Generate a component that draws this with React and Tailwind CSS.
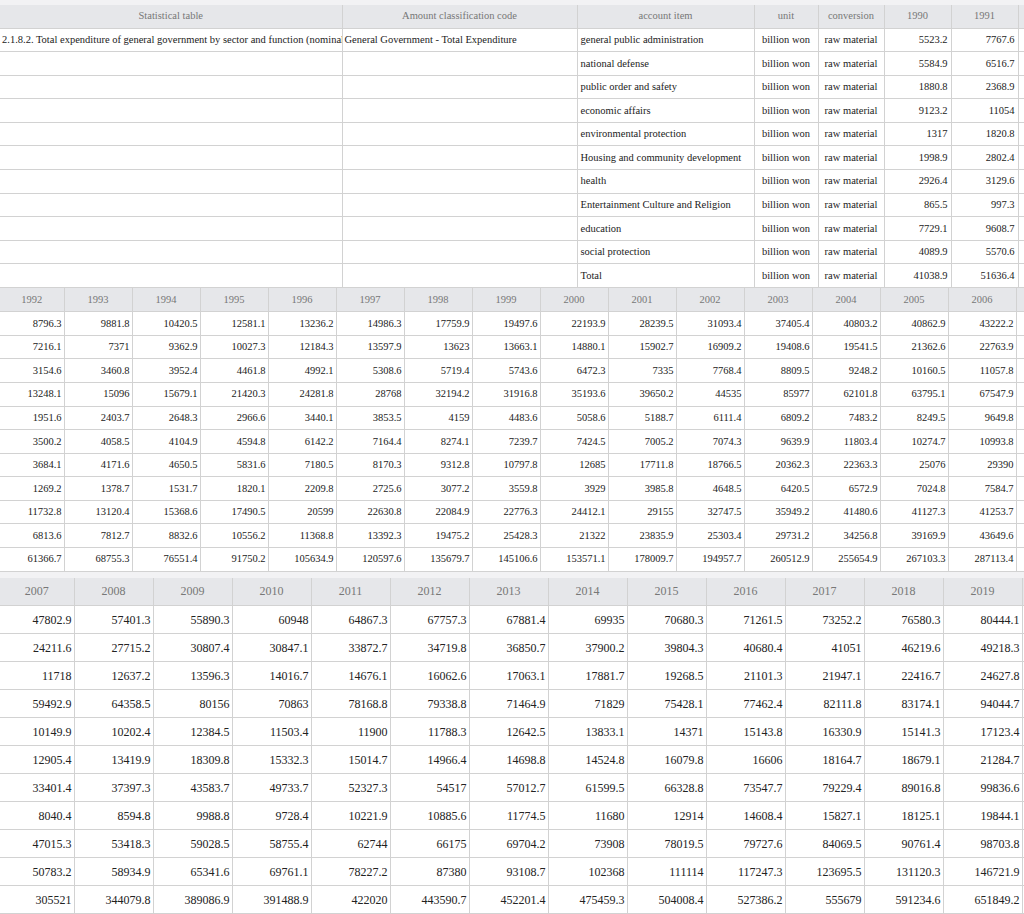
const items = ["general public administration","national defense","public order and safety","economic affairs","environmental protection","Housing and community development","health","Entertainment Culture and Religion","education","social protection","Total"];
const v90 = ["5523.2","5584.9","1880.8","9123.2","1317","1998.9","2926.4","865.5","7729.1","4089.9","41038.9"];
const v91 = ["7767.6","6516.7","2368.9","11054","1820.8","2802.4","3129.6","997.3","9608.7","5570.6","51636.4"];
const y2 = ["1992","1993","1994","1995","1996","1997","1998","1999","2000","2001","2002","2003","2004","2005","2006"];
const d2 = [
["8796.3","9881.8","10420.5","12581.1","13236.2","14986.3","17759.9","19497.6","22193.9","28239.5","31093.4","37405.4","40803.2","40862.9","43222.2"],
["7216.1","7371","9362.9","10027.3","12184.3","13597.9","13623","13663.1","14880.1","15902.7","16909.2","19408.6","19541.5","21362.6","22763.9"],
["3154.6","3460.8","3952.4","4461.8","4992.1","5308.6","5719.4","5743.6","6472.3","7335","7768.4","8809.5","9248.2","10160.5","11057.8"],
["13248.1","15096","15679.1","21420.3","24281.8","28768","32194.2","31916.8","35193.6","39650.2","44535","85977","62101.8","63795.1","67547.9"],
["1951.6","2403.7","2648.3","2966.6","3440.1","3853.5","4159","4483.6","5058.6","5188.7","6111.4","6809.2","7483.2","8249.5","9649.8"],
["3500.2","4058.5","4104.9","4594.8","6142.2","7164.4","8274.1","7239.7","7424.5","7005.2","7074.3","9639.9","11803.4","10274.7","10993.8"],
["3684.1","4171.6","4650.5","5831.6","7180.5","8170.3","9312.8","10797.8","12685","17711.8","18766.5","20362.3","22363.3","25076","29390"],
["1269.2","1378.7","1531.7","1820.1","2209.8","2725.6","3077.2","3559.8","3929","3985.8","4648.5","6420.5","6572.9","7024.8","7584.7"],
["11732.8","13120.4","15368.6","17490.5","20599","22630.8","22084.9","22776.3","24412.1","29155","32747.5","35949.2","41480.6","41127.3","41253.7"],
["6813.6","7812.7","8832.6","10556.2","11368.8","13392.3","19475.2","25428.3","21322","23835.9","25303.4","29731.2","34256.8","39169.9","43649.6"],
["61366.7","68755.3","76551.4","91750.2","105634.9","120597.6","135679.7","145106.6","153571.1","178009.7","194957.7","260512.9","255654.9","267103.3","287113.4"],
];
const y3 = ["2007","2008","2009","2010","2011","2012","2013","2014","2015","2016","2017","2018","2019"];
const d3 = [
["47802.9","57401.3","55890.3","60948","64867.3","67757.3","67881.4","69935","70680.3","71261.5","73252.2","76580.3","80444.1"],
["24211.6","27715.2","30807.4","30847.1","33872.7","34719.8","36850.7","37900.2","39804.3","40680.4","41051","46219.6","49218.3"],
["11718","12637.2","13596.3","14016.7","14676.1","16062.6","17063.1","17881.7","19268.5","21101.3","21947.1","22416.7","24627.8"],
["59492.9","64358.5","80156","70863","78168.8","79338.8","71464.9","71829","75428.1","77462.4","82111.8","83174.1","94044.7"],
["10149.9","10202.4","12384.5","11503.4","11900","11788.3","12642.5","13833.1","14371","15143.8","16330.9","15141.3","17123.4"],
["12905.4","13419.9","18309.8","15332.3","15014.7","14966.4","14698.8","14524.8","16079.8","16606","18164.7","18679.1","21284.7"],
["33401.4","37397.3","43583.7","49733.7","52327.3","54517","57012.7","61599.5","66328.8","73547.7","79229.4","89016.8","99836.6"],
["8040.4","8594.8","9988.8","9728.4","10221.9","10885.6","11774.5","11680","12914","14608.4","15827.1","18125.1","19844.1"],
["47015.3","53418.3","59028.5","58755.4","62744","66175","69704.2","73908","78019.5","79727.6","84069.5","90761.4","98703.8"],
["50783.2","58934.9","65341.6","69761.1","78227.2","87380","93108.7","102368","111114","117247.3","123695.5","131120.3","146721.9"],
["305521","344079.8","389086.9","391488.9","422020","443590.7","452201.4","475459.3","504008.4","527386.2","555679","591234.6","651849.2"],
];

const th = "bg-[#e6e7ea] text-[#777] font-normal border-r border-b border-[#d2d2d2] text-center overflow-hidden whitespace-nowrap";
const td = "border-r border-b border-[#d2d2d2] overflow-hidden whitespace-nowrap text-[#222] bg-white";

export default function App() {
  return (
    <div className="w-[1024px] h-[914px] overflow-hidden bg-[#f2f2f4] pt-[5px]" style={{ fontFamily: '"Liberation Serif", "Times New Roman", serif' }}>
      <table className="table-fixed border-collapse text-[10.5px] w-[1024px]">
        <colgroup>
          <col className="w-[342px]" /><col className="w-[235px]" /><col className="w-[177px]" /><col className="w-[64px]" /><col className="w-[66px]" /><col className="w-[67px]" /><col className="w-[67px]" /><col className="w-[6px]" />
        </colgroup>
        <thead>
          <tr className="h-[23px]">
            <th className={th}>Statistical table</th>
            <th className={th}>Amount classification code</th>
            <th className={th}>account item</th>
            <th className={th}>unit</th>
            <th className={th}>conversion</th>
            <th className={th}>1990</th>
            <th className={th}>1991</th>
            <th className="bg-[#e6e7ea] border-b border-[#d2d2d2]"></th>
          </tr>
        </thead>
        <tbody>
          {items.map((it, i) => (
            <tr key={i} className="h-[23.6px]">
              <td className={td + " pl-[2px]"}>{i === 0 ? "2.1.8.2. Total expenditure of general government by sector and function (nominal" : ""}</td>
              <td className={td + " pl-[2px]"}>{i === 0 ? "General Government - Total Expenditure" : ""}</td>
              <td className={td + " pl-[3px]"}>{it}</td>
              <td className={td + " text-center"}>billion won</td>
              <td className={td + " text-center"}>raw material</td>
              <td className={td + " text-right pr-[3px]"}>{v90[i]}</td>
              <td className={td + " text-right pr-[3px]"}>{v91[i]}</td>
              <td className="bg-white border-b border-[#d2d2d2]"></td>
            </tr>
          ))}
        </tbody>
      </table>
      <table className="table-fixed border-collapse text-[10.5px] w-[1024px]">
        <colgroup>
          <col className="w-[64px]" />
          {y2.slice(1).map(y => <col key={y} className="w-[68px]" />)}
          <col className="w-[8px]" />
        </colgroup>
        <thead>
          <tr className="h-[23.6px]">
            {y2.map(y => <th key={y} className={th}>{y}</th>)}
            <th className="bg-[#e6e7ea] border-b border-[#d2d2d2]"></th>
          </tr>
        </thead>
        <tbody>
          {d2.map((r, i) => (
            <tr key={i} className="h-[23.6px]">
              {r.map((v, j) => <td key={j} className={td + " text-right pr-[2px]"}>{v}</td>)}
              <td className="bg-white border-b border-[#d2d2d2]"></td>
            </tr>
          ))}
        </tbody>
      </table>
      <div className="h-[6px]" />
      <table className="table-fixed border-collapse text-[12px] w-[1024px]">
        <colgroup>
          <col className="w-[74px]" />
          {y3.slice(1).map(y => <col key={y} className="w-[79px]" />)}
          <col className="w-[2px]" />
        </colgroup>
        <thead>
          <tr className="h-[28px]">
            {y3.map(y => <th key={y} className={th}>{y}</th>)}
            <th className="bg-[#e6e7ea] border-b border-[#d2d2d2]"></th>
          </tr>
        </thead>
        <tbody>
          {d3.map((r, i) => (
            <tr key={i} className="h-[28px]">
              {r.map((v, j) => <td key={j} className={td + " text-right pr-[2px]"}>{v}</td>)}
              <td className="bg-white border-b border-[#d2d2d2]"></td>
            </tr>
          ))}
        </tbody>
      </table>
    </div>
  );
}
